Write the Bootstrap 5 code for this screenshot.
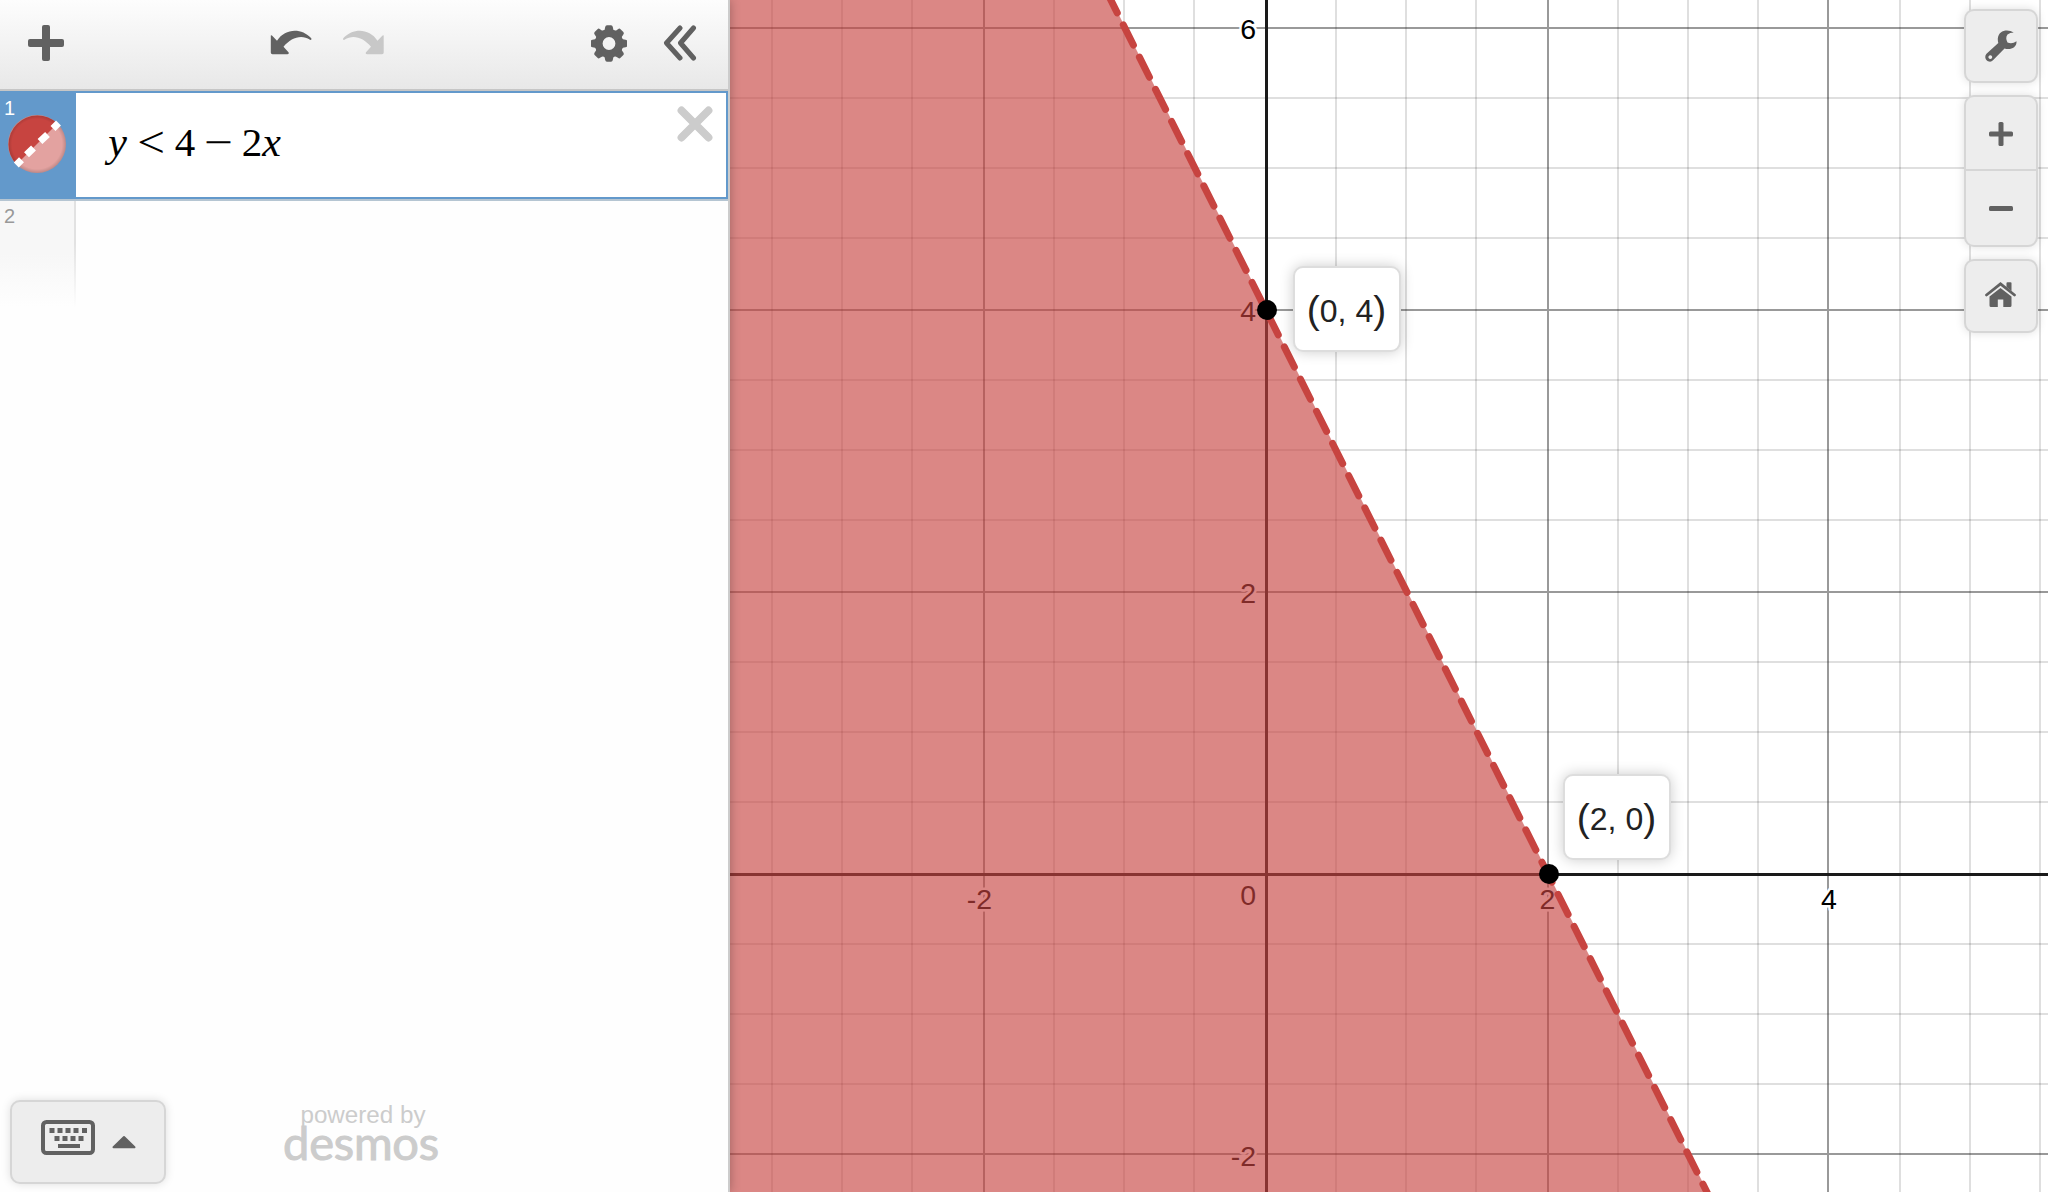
<!DOCTYPE html>
<html lang="en">
<head>
<meta charset="utf-8">
<title>Graphing Calculator</title>
<link rel="stylesheet" href="https://cdn.jsdelivr.net/npm/bootstrap@5.3.0/dist/css/bootstrap.min.css">
<style>
body{font-family:"Liberation Sans",Arial,sans-serif;background:#fff}
svg{display:block}
.side-panel{width:730px;border-right:2px solid #ccc;background:#fefefe;z-index:2;box-shadow:0 0 10px rgba(0,0,0,.28)}
.tool-strip{height:91px;border-bottom:2px solid #c6c6c6;background:linear-gradient(#fdfdfd,#e8e8e8);padding:0 31px 3px 28px}
.undo-set{margin-left:206px;gap:30px}
.panel-set{gap:36px}
.expr-active{height:108px;border:2px solid #6399cb;border-left:0;box-shadow:0 2px 0 #b5c5d2;background:#fff;position:relative}
.expr-tab{width:76px;background:#6399cb;color:#fff;margin:-2px 0;padding:5px 0 0 4px;font-size:20px;line-height:24px}
.color-dot{margin:-5px 0 0 4px}
.formula{font:41px/50px "Liberation Serif","Times New Roman",serif;color:#000;padding:24px 0 0 31px}
.formula>*{display:flex;justify-content:center}
.formula i{font-size:42px}
.g-y{width:21px}.g-lt{width:46px;transform:translateY(1px) scale(1.2,1.1)}.g-num{width:22px}.g-minus{width:45px;transform:scaleX(1.25)}.g-x{width:17px}
.close-icon{margin:13px 13px 0 0}
.expr-next{height:106px;margin-top:2px}
.next-tab{width:76px;padding:3px 0 0 4px;font-size:20px;line-height:24px;color:#999;border-right:2px solid;border-image:linear-gradient(#e2e2e2 40%,#fefefe) 1;background:linear-gradient(#f7f7f7 50%,#fefefe)}
.panel-foot{padding:0 0 8px 10px}
.soft-btn{background:#ededed;border:2px solid #d6d6d6;border-radius:10px;box-shadow:0 0 10px rgba(0,0,0,.13)}
.keypad-btn{width:156px;height:84px;padding:0 28px 0 29px}
.brand-box{color:#ccc;margin-left:117px;width:156px;padding-bottom:19px}
.brand-by{font-size:24.2px;line-height:24px;padding-left:4px}
.brand-word{font:400 47px/30px Lato,sans-serif;-webkit-text-stroke:1px #ccc;letter-spacing:-.2px;height:30px}
.graph-area{min-width:0}
.axis-num{font:28.500px "Liberation Sans",Arial,sans-serif;fill:#000;stroke:#fff;stroke-width:5px;paint-order:stroke;stroke-linejoin:round}
.coord-tip{width:108px;height:86px;background:#fff;border:2px solid #ddd;border-radius:10px;box-shadow:0 0 14px rgba(0,0,0,.2);font-size:32px;color:#222;line-height:1;padding:4px 1px 0 0}
.coord-tip .paren{font-size:39px;position:relative;top:-2px}
.tip-a{left:563px;top:266px}
.tip-b{left:833px;top:774px}
.graph-tools{right:10px;top:9px;gap:12px}
.graph-tools .soft-btn{width:74px}
.tool-cell{height:74px}
.zoom-cell{height:72px;padding-top:2px}
.zoom-cell+.zoom-cell{border-top:2px solid #d6d6d6;height:76px;padding-top:0}
</style>
<script src="https://cdn.jsdelivr.net/npm/bootstrap@5.3.0/dist/js/bootstrap.bundle.min.js"></script>
</head>
<body class="overflow-hidden">
<div class="d-flex vh-100">
  <aside class="side-panel d-flex flex-column flex-shrink-0 position-relative">
    <div class="tool-strip d-flex align-items-center">
      <svg width="36" height="36" fill="#616161"><rect x="14" width="8" height="36" rx="2"/><rect y="14" width="36" height="8" rx="2"/></svg>
      <div class="undo-set d-flex align-items-center">
        <svg width="42" height="24" viewBox="0 0 42 24" fill="#616161" overflow="visible"><path id="bend" d="M.8 4.500Q1.500 4 2.200 4.800L7 9.800C15-2.500 31-3.500 41.300 7.200Q42 9.300 40 8.800C31 3 21 7 13.500 15.700L18.700 21.500Q19.300 23.200 17.500 23.300H2.500Q.8 23.300.8 21.500Z"/></svg>
        <svg width="42" height="24" viewBox="0 0 42 24" fill="#c8c8c8" overflow="visible"><use href="#bend" transform="matrix(-1 0 0 1 42.500 0)"/></svg>
      </div>
      <div class="panel-set d-flex align-items-center ms-auto">
        <svg width="36" height="37" viewBox="-18 -18.500 36 37" fill="#616161">
          <circle r="10.300" fill="none" stroke="#616161" stroke-width="7.800"/>
          <g id="teeth"><path id="tooth" d="M-5.500-12.500Q-4-13.500-3.800-16.500Q-3.500-18.300-2-18.300H2Q3.500-18.300 3.800-16.500Q4-13.500 5.500-12.500Z"/><use href="#tooth" transform="rotate(90)"/><use href="#tooth" transform="rotate(180)"/><use href="#tooth" transform="rotate(270)"/></g>
          <use href="#teeth" transform="rotate(45)"/>
        </svg>
        <svg width="34" height="36" fill="none" stroke="#616161" stroke-width="5" stroke-linecap="round" stroke-linejoin="round"><path d="M17 3 3.500 18 17 33M30.500 3 17.500 18 30.500 33"/></svg>
      </div>
    </div>
    <div class="expr-active d-flex">
      <div class="expr-tab">1
        <svg class="color-dot" width="58" height="58" viewBox="0 0 58 58">
          <defs><radialGradient id="rim"><stop offset=".86" stop-opacity="0"/><stop offset="1" stop-opacity=".16"/></radialGradient></defs>
          <circle cx="29" cy="29" r="29" fill="#e3a2a0"/><path d="M8.500 49.500A29 29 0 0 1 49.500 8.500Z" fill="#c74440"/>
          <circle cx="29" cy="29" r="29" fill="url(#rim)"/>
          <path d="M8.300 50 13.500 44.800M18.500 39.800 25.500 33M32 26.500 39.500 19.500M45 13.500 50.500 8" stroke="#fff" stroke-width="7"/>
        </svg>
      </div>
      <div class="formula d-flex text-nowrap"><i class="g-y">y</i><span class="g-lt">&lt;</span><span class="g-num">4</span><span class="g-minus">−</span><span class="g-num">2</span><i class="g-x">x</i></div>
      <svg class="close-icon ms-auto" width="36" height="36" stroke="#ccc"><path d="M4 4 32 32M32 4 4 32" stroke-width="6.500"/><path d="M4.500 4.500 31.500 31.500M31.500 4.500 4.500 31.500" stroke-linecap="round" stroke-width="7.800"/></svg>
    </div>
    <div class="expr-next d-flex"><div class="next-tab">2</div></div>
    <div class="panel-foot d-flex align-items-end mt-auto">
      <div class="soft-btn keypad-btn d-flex align-items-center justify-content-between">
        <svg width="54" height="49" viewBox="0 0 54 49" fill="#616161">
          <rect x="2" y="4" width="50" height="31" rx="3.500" fill="none" stroke="#616161" stroke-width="4"/>
          <path d="M8.500 10h5v5h-5zM16.500 10h5v5h-5zM24.500 10h5v5h-5zM32.500 10h5v5h-5zM41 10h5v5h-5zM13.500 18h5v5h-5zM21.500 18h5v5h-5zM29.500 18h5v5h-5zM37.500 18h5v5h-5zM17 26h22v4h-22z"/>
        </svg>
        <svg width="24" height="14"><path d="M12 2 22.500 12.300H1.500Z" fill="#616161" stroke="#616161" stroke-width="2" stroke-linejoin="round"/></svg>
      </div>
      <div class="brand-box d-flex flex-column align-items-center mb-2">
        <div class="brand-by text-nowrap">powered by</div>
        <div class="brand-word">desmos</div>
      </div>
    </div>
  </aside>
  <main class="graph-area flex-grow-1 position-relative">
    <svg id="plot" width="1318" height="1192" viewBox="730 0 1318 1192">
      <path stroke="#000" stroke-opacity=".125" stroke-width="2" d="M772 0V1192M842 0V1192M912 0V1192M1054 0V1192M1124 0V1192M1194 0V1192M1336 0V1192M1406 0V1192M1476 0V1192M1618 0V1192M1688 0V1192M1758 0V1192M1900 0V1192M1970 0V1192M2040 0V1192"/>
      <path stroke="#000" stroke-opacity=".125" stroke-width="2" d="M730 98H2048M730 168H2048M730 238H2048M730 380H2048M730 450H2048M730 520H2048M730 662H2048M730 732H2048M730 802H2048M730 944H2048M730 1014H2048M730 1084H2048"/>
      <path stroke="#000" stroke-opacity=".4" stroke-width="2" d="M984 0V1192M1548 0V1192M1828 0V1192M730 28H2048M730 310H2048M730 592H2048M730 1154H2048"/>
      <path stroke="#1a1a1a" stroke-width="3" d="M1266.500 0V1192M730 874.500H2048"/>
      <g class="axis-num" text-anchor="end"><text x="1256" y="39">6</text><text x="1256" y="321">4</text><text x="1256" y="603">2</text><text x="1256" y="905">0</text><text x="1256" y="1166">-2</text></g>
      <g class="axis-num" text-anchor="middle"><text x="979.500" y="909">-2</text><text x="1547.500" y="909">2</text><text x="1829" y="909">4</text></g>
      <path d="M730 0H1111.500L1707.500 1192H730Z" fill="#c74440" fill-opacity=".64"/>
      <path d="M1106-9.700 1723 1224.200" stroke="#c74440" stroke-width="7" stroke-linecap="round" stroke-dasharray="22.500 13.500" stroke-dashoffset="-2.700"/>
      <circle cx="1267" cy="310" r="10"/><circle cx="1549" cy="874" r="10"/>
    </svg>
    <div class="coord-tip tip-a position-absolute d-flex align-items-center justify-content-center"><span class="paren">(</span><span>0, 4</span><span class="paren">)</span></div>
    <div class="coord-tip tip-b position-absolute d-flex align-items-center justify-content-center"><span class="paren">(</span><span>2, 0</span><span class="paren">)</span></div>
    <div class="graph-tools position-absolute d-flex flex-column">
      <div class="soft-btn tool-cell d-flex align-items-center justify-content-center">
        <svg width="32" height="32" viewBox="0 0 32 32" fill="#616161"><path fill-rule="evenodd" d="M28.700 2.500C23-1.500 13.500 0 12.800 8.500Q12.700 11 13.300 13L1.500 23.800C-.8 26.500.3 30 3 31.200Q6 32.500 8 30.200L19.500 18.500C26 20.500 32 17 31.500 11.300Q27 14.500 22.500 12.500Q20 8 22.500 4.500Q25 2.500 28.700 2.500ZM5.300 25.200a1.900 1.900 0 1 0 .01 0Z"/></svg>
      </div>
      <div class="soft-btn d-flex flex-column">
        <div class="zoom-cell d-flex align-items-center justify-content-center"><svg width="24" height="24" fill="#616161"><rect x="9.500" width="5" height="24" rx="1.500"/><rect y="9.500" width="24" height="5" rx="1.500"/></svg></div>
        <div class="zoom-cell d-flex align-items-center justify-content-center"><svg width="24" height="5" fill="#616161"><rect width="24" height="5" rx="1.500"/></svg></div>
      </div>
      <div class="soft-btn tool-cell d-flex align-items-center justify-content-center">
        <svg width="32" height="28" viewBox="0 0 32 28" fill="#616161"><path d="M1.500 13 15.500 1.800 29.500 13" fill="none" stroke="#616161" stroke-width="2.800" stroke-linecap="round"/><path d="M21.500 1Q21.500.2 22.500.2H25.500Q26.500.2 26.500 1V9L21.500 5ZM15.500 6 26.500 14.500V23.500Q26.500 25 25 25H18.300V17.500H12.800V25H6Q4.500 25 4.500 23.500V14.500Z"/></svg>
      </div>
    </div>
  </main>
</div>
</body>
</html>
